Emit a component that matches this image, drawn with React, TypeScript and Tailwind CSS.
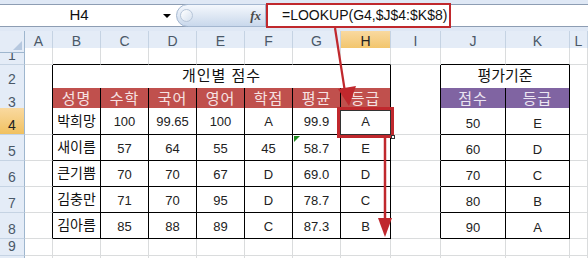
import React from 'react'

const GRID = 'grid grid-cols-[25px_28px_48px_48px_48px_48px_48px_48px_50px_50px_65px_64px_18px]'
const LETTERS = ['A', 'B', 'C', 'D', 'E', 'F', 'G', 'H', 'I', 'J', 'K', 'L']
const ROW_H = ['h-[17px]', 'h-[23px]', 'h-[20px]', 'h-[27px]', 'h-[26px]', 'h-[26px]', 'h-[26px]', 'h-[26px]', 'h-[17px]', 'h-[6px]']

const scores = [
  ['박희망', '100', '99.65', '100', 'A', '99.9', 'A'],
  ['새이름', '57', '64', '55', '45', '58.7', 'E'],
  ['큰기쁨', '70', '70', '67', 'D', '69.0', 'D'],
  ['김충만', '71', '70', '95', 'D', '78.7', 'C'],
  ['김아름', '85', '88', '89', 'C', '87.3', 'B'],
]
const criteria = [
  ['50', 'E'],
  ['60', 'D'],
  ['70', 'C'],
  ['80', 'B'],
  ['90', 'A'],
]

const inT1 = (r: number, c: number) => r >= 2 && r <= 8 && c >= 2 && c <= 8
const inT2 = (r: number, c: number) => r >= 2 && r <= 8 && c >= 10 && c <= 11
const inT = (r: number, c: number) => inT1(r, c) || inT2(r, c)

type CellProps = {
  r: number
  c: number
  span?: string
  className?: string
  children?: React.ReactNode
}

const Cell = ({ r, c, span = '', className = '', children }: CellProps) => {
  const last = span === 'col-span-7' ? c + 6 : span === 'col-span-2' ? c + 1 : c
  const rb = inT(r, last) || inT(r, last + 1)
  const bb = inT(r, c) || inT(r + 1, c)
  return (
    <div
      className={`${span} flex border-r border-b ${rb ? 'border-r-black' : 'border-r-[#dadcdd]'} ${
        bb ? 'border-b-black' : 'border-b-[#dadcdd]'
      } ${className}`}
    >
      {children}
    </div>
  )
}

const RowHead = ({ n }: { n: number }) => (
  <div
    className={`flex items-end justify-center pb-[1px] border-r border-b border-r-[#9eb6ce] border-b-[#c5d3e3] text-[14px] leading-[15px] ${
      n === 4 ? 'bg-gradient-to-b from-[#f9d99f] to-[#f1c15f] text-[#222]' : 'bg-[#e4ecf7] text-[#4a5868]'
    }`}
  >
    {n < 10 ? n : null}
  </div>
)

export default function App() {
  const rows: React.ReactNode[] = []

  for (let r = 1; r <= 10; r++) {
    const cells: React.ReactNode[] = [<RowHead key="h" n={r} />]
    let c = 1
    while (c <= 12) {
      if (r === 2 && c === 2) {
        cells.push(
          <Cell key={c} r={r} c={c} span="col-span-7" className="items-center justify-center bg-white text-[15px] text-[#111] tracking-[1px]">
            개인별 점수
          </Cell>
        )
        c += 7
        continue
      }
      if (r === 2 && c === 10) {
        cells.push(
          <Cell key={c} r={r} c={c} span="col-span-2" className="items-center justify-center bg-white text-[15px] text-[#111]">
            평가기준
          </Cell>
        )
        c += 2
        continue
      }
      let content: React.ReactNode = null
      let cls = 'bg-white'
      if (r === 3 && inT1(r, c)) {
        content = ['성명', '수학', '국어', '영어', '학점', '평균', '등급'][c - 2]
        cls = 'bg-[#c0504d] text-[#f6e2e2] text-[15px] items-center justify-center tracking-[1px]'
      } else if (r === 3 && inT2(r, c)) {
        content = ['점수', '등급'][c - 10]
        cls = 'bg-[#8064a2] text-[#ebe5f2] text-[15px] items-center justify-center tracking-[1px]'
      } else if (r >= 4 && r <= 8 && inT1(r, c)) {
        content = scores[r - 4][c - 2]
        cls =
          c === 2
            ? 'bg-white text-[14px] text-[#111] items-center justify-center'
            : 'bg-white text-[13px] text-[#222] items-center justify-center pt-[2px]'
      } else if (r >= 4 && r <= 8 && inT2(r, c)) {
        content = criteria[r - 4][c - 10]
        cls = 'bg-white text-[13px] text-[#222] items-end justify-center pb-[2px] leading-[16px]'
      }
      cells.push(
        <Cell key={c} r={r} c={c} className={cls}>
          {content}
        </Cell>
      )
      c++
    }
    rows.push(
      <div key={r} className={`${GRID} ${ROW_H[r - 1]}`}>
        {cells}
      </div>
    )
  }

  return (
    <div
      className="relative w-[588px] h-[258px] overflow-hidden bg-white"
      style={{ fontFamily: '"Liberation Sans", "Noto Sans CJK KR", sans-serif' }}
    >
      {/* formula bar */}
      <div className="h-[31px] bg-[#dfe8f5] py-[4px]">
        <div className="h-[23px] flex items-center bg-white border-y border-[#8d9db3]">
          <div className="w-[158px] text-center text-[15px] text-[#111]">H4</div>
          <div className="w-[18px] flex justify-center">
            <div className="w-0 h-0 border-x-[4px] border-x-transparent border-t-[4px] border-t-black" />
          </div>
          <div className="h-[23px] w-[90px] flex items-center rounded-l-full border border-[#a4b7d0] bg-gradient-to-b from-[#f4f8fd] via-[#dfe8f4] to-[#c9d8ec]">
            <div className="ml-[3px] w-[13px] h-[13px] rounded-full border border-[#b7c6d9] bg-gradient-to-br from-white to-[#d6e1ef]" />
            <div className="ml-auto mr-[4px] font-['Liberation_Serif'] italic font-bold text-[13px] text-[#4a4a4a]">fx</div>
          </div>
          <div className="h-[25px] w-[185px] flex items-center pl-[14px] border-2 border-[#c0282d] text-[14px] text-[#111]">
            =LOOKUP(G4,$J$4:$K$8)
          </div>
        </div>
      </div>

      {/* column headers */}
      <div className={`${GRID} h-[17px]`}>
        <div className="relative bg-[#e4ecf7] border-r border-b border-r-[#9eb6ce] border-b-[#9eb6ce]">
          <div className="absolute right-[2px] bottom-[2px] w-0 h-0 border-l-[9px] border-l-transparent border-b-[9px] border-b-[#b6c8df]" />
        </div>
        {LETTERS.map((l) => (
          <div
            key={l}
            className={`flex items-center justify-center border-r border-b border-r-[#c5d3e3] border-b-[#9eb6ce] text-[14px] ${
              l === 'H' ? 'bg-gradient-to-b from-[#f9d99f] to-[#f1c15f] text-[#222]' : 'bg-[#e4ecf7] text-[#4a5868]'
            }`}
          >
            {l}
          </div>
        ))}
      </div>

      {rows}

      {/* selection on H4 */}
      <div className="absolute left-[337px] top-[107px] w-[57px] h-[31px] border-[3px] border-[#c0282d]">
        <div className="w-full h-full border border-[#333]" />
        <div className="absolute -right-[4px] -bottom-[4px] w-[4px] h-[4px] bg-white border border-[#333]" />
      </div>

      {/* error marker on G5 */}
      <svg className="absolute left-[294px] top-[136px]" width="7" height="7">
        <polygon points="0,0 6,0 0,6" fill="#1f8a1f" />
      </svg>

      {/* arrows */}
      <svg className="absolute inset-0 pointer-events-none" width="588" height="258">
        <line x1="335" y1="28" x2="345" y2="92" stroke="#c0282d" strokeWidth="2.2" />
        <polygon points="338,89 356,86 349,106" fill="#c0282d" />
        <line x1="385" y1="137" x2="385" y2="220" stroke="#c0282d" strokeWidth="2.5" />
        <polygon points="378,218 392,218 385,237" fill="#c0282d" />
      </svg>
    </div>
  )
}
